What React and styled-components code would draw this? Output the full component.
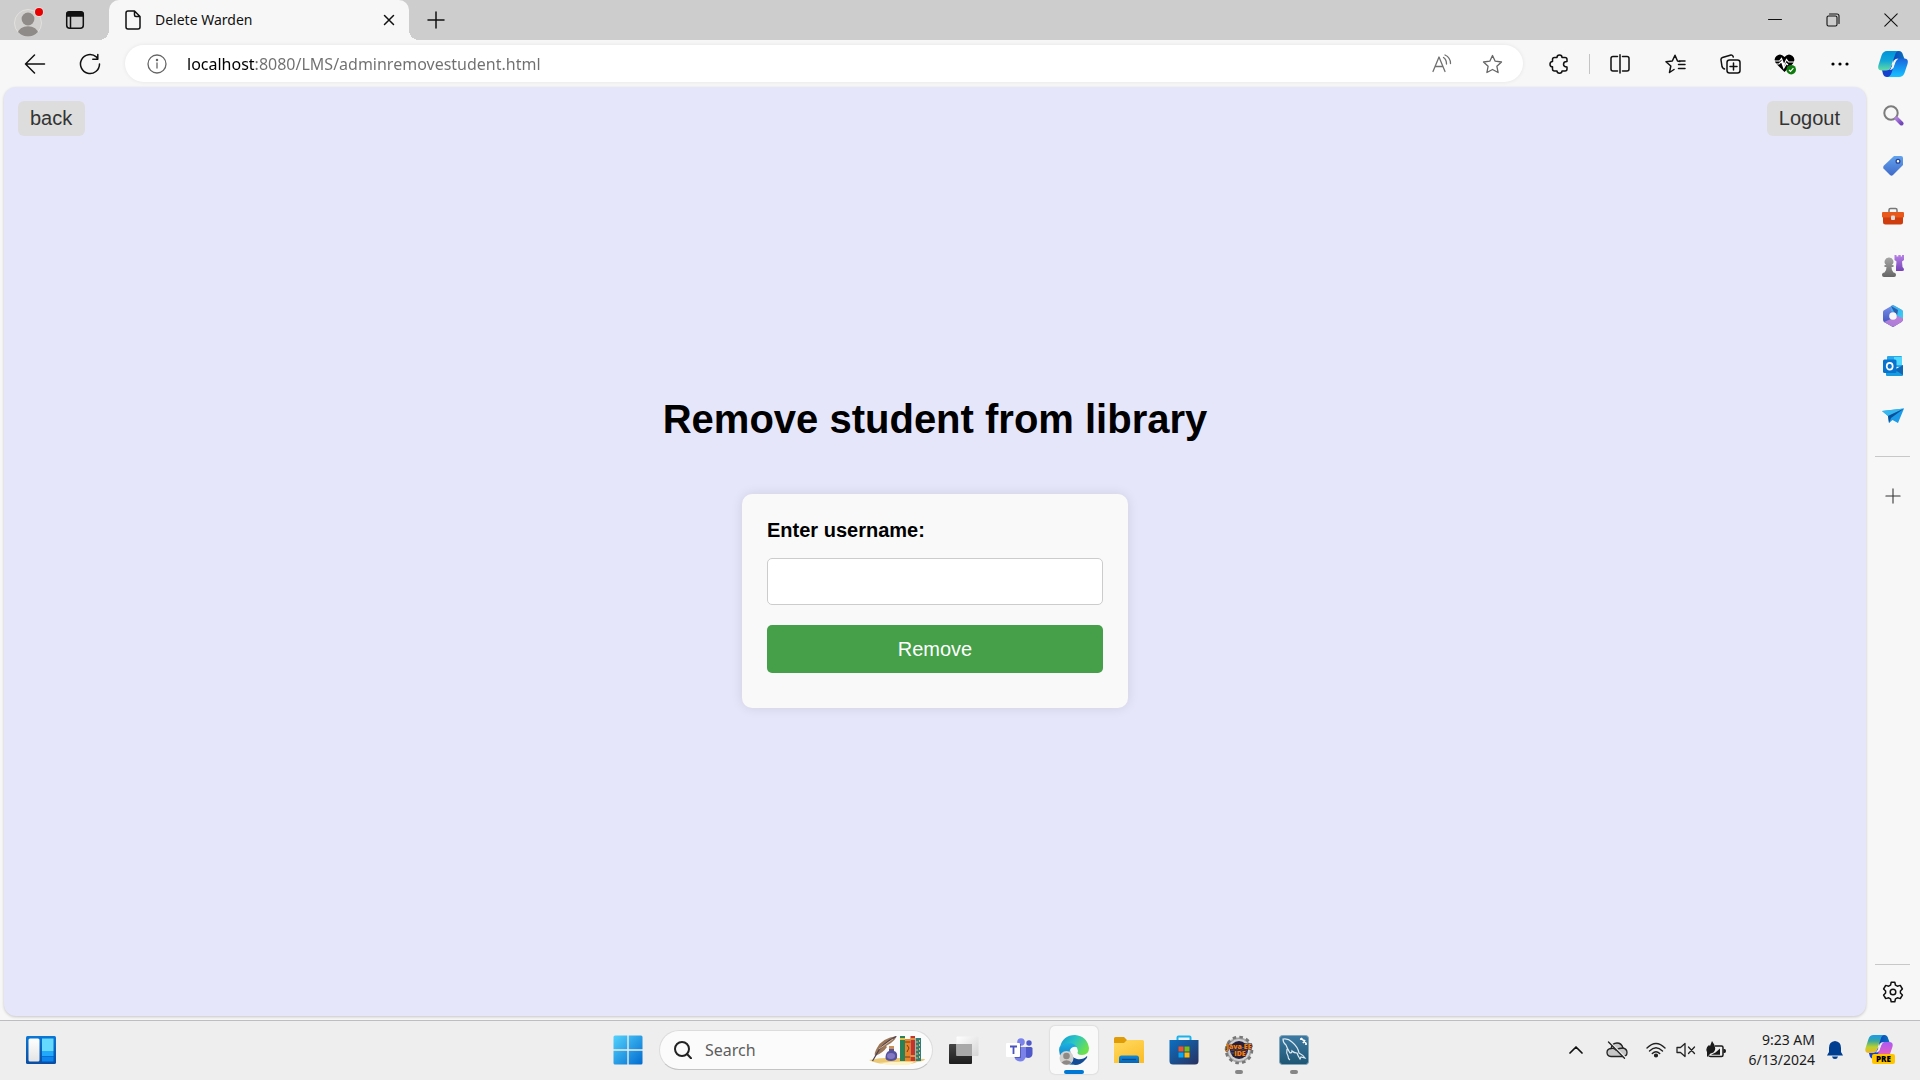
import React, { useState } from "react";
import styled, { createGlobalStyle } from "styled-components";

const GlobalStyle = createGlobalStyle`
  * { box-sizing: border-box; }
  body { margin: 0; background: #f7f7f7; font-family: "Noto Sans", "Open Sans", sans-serif; color: #1b1b1b; }
  button, input { font: inherit; color: inherit; }
  svg { display: block; flex: none; }
`;

/* ---------- Layout ---------- */

const Screen = styled.div`
  display: flex;
  flex-direction: column;
  min-height: 100vh;
`;

const BareButton = styled.button`
  display: flex;
  align-items: center;
  justify-content: center;
  flex: none;
  width: ${(p) => p.$w || 50}px;
  height: ${(p) => p.$h || 40}px;
  padding: 0;
  border: 0;
  background: transparent;
  border-radius: 4px;
  &:hover { background: rgba(0, 0, 0, 0.05); }
`;

/* ---------- Browser: title bar ---------- */

const TitleBar = styled.header`
  display: flex;
  align-items: center;
  height: 40px;
  padding-left: 4px;
  background: #cdcdcd;
`;

const Tab = styled.div`
  position: relative;
  display: flex;
  align-items: center;
  gap: 14px;
  width: 300px;
  height: 40px;
  margin: 0 7px 0 11px;
  padding: 0 4px 0 16px;
  border-radius: 10px 10px 0 0;
  background: #f7f7f7;
  &::before, &::after {
    content: "";
    position: absolute;
    bottom: 0;
    width: 10px;
    height: 10px;
  }
  &::before { left: -10px; background: radial-gradient(circle at 0 0, transparent 10px, #f7f7f7 10px); }
  &::after { right: -10px; background: radial-gradient(circle at 100% 0, transparent 10px, #f7f7f7 10px); }
`;

const TabTitle = styled.span`
  flex: 1;
  font-size: 14px;
  line-height: 20px;
  color: #111;
`;

const WindowControls = styled.div`
  display: flex;
  margin-left: auto;
`;

/* ---------- Browser: tool bar ---------- */

const ToolBar = styled.nav`
  display: flex;
  align-items: center;
  gap: 5px;
  height: 47px;
  padding: 0 5px 0 10px;
  background: #f7f7f7;
`;

const AddressBar = styled.div`
  display: flex;
  align-items: center;
  flex: 1;
  height: 37px;
  margin: 0 6px 0 5px;
  padding: 0 6px 0 22px;
  gap: 20px;
  border-radius: 19px;
  background: #fff;
  box-shadow: 0 0 4px rgba(0, 0, 0, 0.08);
`;

const AddressInput = styled.input`
  flex: 1;
  min-width: 0;
  height: 32px;
  padding: 0;
  border: 0;
  outline: 0;
  font-size: 16px;
  color: transparent;
  caret-color: #111;
  background: linear-gradient(90deg, #000 68px, #6f6f6f 68px);
  background-clip: text;
`;

const AddressActions = styled.div`
  display: flex;
`;

const VerticalRule = styled.div`
  width: 1px;
  height: 20px;
  background: #c4c4c4;
`;

/* ---------- Browser: body ---------- */

const BrowserBody = styled.div`
  display: flex;
  flex: 1;
  background: #f7f7f7;
`;

const Page = styled.main`
  display: flex;
  flex: 1;
  flex-direction: column;
  margin: 0 0 4px 4px;
  border-radius: 12px;
  background: #e6e6fa;
  box-shadow: 0 1px 3px rgba(0, 0, 0, 0.2);
  font-family: "Liberation Sans", Arial, sans-serif;
`;

const PageActions = styled.div`
  display: flex;
  justify-content: space-between;
  padding: 14px 13px 0 14px;
`;

const PageLink = styled.a`
  padding: 6px 13px 6px 12px;
  border-radius: 6px;
  background: #ddd;
  color: #333;
  font-size: 20px;
  line-height: 23px;
  text-decoration: none;
`;

const PageContent = styled.div`
  display: flex;
  flex: 1;
  flex-direction: column;
  align-items: center;
  justify-content: center;
  gap: 52px;
  padding-bottom: 47px;
`;

const Heading = styled.h1`
  margin: 0;
  font-size: 40px;
  line-height: 45px;
  color: #000;
`;

const Card = styled.form`
  display: flex;
  flex-direction: column;
  width: 386px;
  padding: 25px 25px 35px;
  border-radius: 10px;
  background: #f9f9f9;
  box-shadow: 0 0 12px rgba(0, 0, 0, 0.1);
`;

const FieldLabel = styled.label`
  margin-bottom: 16px;
  font-size: 20px;
  font-weight: bold;
  line-height: 23px;
  color: #000;
`;

const Field = styled.input`
  height: 47px;
  margin-bottom: 20px;
  padding: 12px;
  border: 1px solid #ccc;
  border-radius: 5px;
  background: #fff;
  font-size: 20px;
`;

const SubmitButton = styled.button`
  height: 48px;
  border: 0;
  border-radius: 5px;
  background: #45a049;
  color: #fff;
  font-size: 20px;
`;

const Sidebar = styled.aside`
  display: flex;
  flex-direction: column;
  align-items: center;
  width: 54px;
  padding: 4px 1px 3px 0;
`;

const SidebarRule = styled.div`
  width: 35px;
  height: 1px;
  margin: ${(p) => (p.$bottom ? "auto 0 2px" : "15px 0 14px")};
  background: #c8c8c8;
`;

/* ---------- Taskbar ---------- */

const Taskbar = styled.footer`
  display: grid;
  grid-template-columns: 1fr auto 1fr;
  align-items: center;
  height: 60px;
  padding: 0 0 2px 2px;
  border-top: 1px solid #bdbdc1;
  background: #eee;
`;

const TaskbarStart = styled.div`
  display: flex;
  padding-left: 15px;
`;

const TaskbarApps = styled.div`
  display: flex;
  align-items: center;
  gap: 7px;
`;

const TaskButton = styled.button`
  position: relative;
  display: flex;
  align-items: center;
  justify-content: center;
  width: 48px;
  height: 48px;
  padding: 0;
  border: 0;
  border-radius: 5px;
  background: ${(p) => (p.$state === "active" ? "#f9f9f9" : "transparent")};
  box-shadow: ${(p) => (p.$state === "active" ? "0 0 2px rgba(0, 0, 0, 0.2)" : "none")};
  &::after {
    content: ${(p) => (p.$state ? '""' : "none")};
    position: absolute;
    bottom: 0;
    width: ${(p) => (p.$state === "active" ? 20 : 8)}px;
    height: 4px;
    border-radius: 2px;
    background: ${(p) => (p.$state === "active" ? "#0078d4" : "#868686")};
  }
`;

const SearchBox = styled.label`
  display: flex;
  align-items: center;
  gap: 13px;
  width: 274px;
  height: 40px;
  padding: 0 7px 0 14px;
  border: 1px solid #dcdcdc;
  border-bottom-color: #c4c4c4;
  border-radius: 20px;
  background: #fbfbfb;
`;

const SearchInput = styled.input`
  flex: 1;
  min-width: 0;
  padding: 0;
  border: 0;
  outline: 0;
  background: transparent;
  font-size: 16px;
  &::placeholder { color: #5e5e5e; opacity: 1; }
`;

const Tray = styled.div`
  display: flex;
  align-items: center;
  justify-content: flex-end;
  padding-right: 15px;
`;

const Clock = styled.time`
  width: 84px;
  font-size: 14px;
  line-height: 20px;
  text-align: right;
  white-space: nowrap;
  color: #1b1b1b;
`;

const BadgeText = styled.text`
  font-family: "Open Sans", "Noto Sans", sans-serif;
  font-weight: 800;
  font-size: ${(p) => p.$size}px;
`;

/* ---------- Icons ---------- */

const Line = ({ w = 24, h = w, box, stroke = "#111", sw = 1.5, children }) => (
  <svg width={w} height={h} viewBox={box || `0 0 ${w} ${h}`} fill="none" stroke={stroke} strokeWidth={sw} strokeLinecap="round" strokeLinejoin="round" aria-hidden="true">
    {children}
  </svg>
);

const Art = ({ w = 24, h = w, box, children }) => (
  <svg width={w} height={h} viewBox={box || `0 0 ${w} ${h}`} aria-hidden="true">{children}</svg>
);

const Grad = ({ id, stops, x1 = 0, y1 = 0, x2 = 1, y2 = 1 }) => (
  <linearGradient id={id} x1={x1} y1={y1} x2={x2} y2={y2}>
    {stops.map((c, i) => <stop key={i} offset={i / (stops.length - 1)} stopColor={c} />)}
  </linearGradient>
);

const AvatarIcon = () => (
  <Art w={32} h={34}>
    <defs><clipPath id="avatarClip"><circle cx="16" cy="20" r="13.5" /></clipPath></defs>
    <circle cx="16" cy="20" r="13.5" fill="#d2d0ce" stroke="#e3e1de" />
    <g clipPath="url(#avatarClip)" fill="#8f8b88">
      <circle cx="16" cy="16" r="6.4" /><ellipse cx="16" cy="30.500" rx="10" ry="7.300" />
    </g>
    <circle cx="27" cy="9" r="4.800" fill="#e3e3e3" /><circle cx="27" cy="9" r="4" fill="#e80000" />
  </Art>
);
const TabActionsIcon = () => (
  <Line w={20} sw={1.5}>
    <rect x="1.700" y="1.700" width="16.600" height="16.600" rx="3" />
    <path d="M2 3.500Q2 2 4 2H16Q18 2 18 3.500V6H2Z" fill="#111" /><path d="M5.500 6V18" />
  </Line>
);
const DocumentIcon = () => (
  <Line w={16} h={20}><path d="M3 1H9.500L15 6.500V17Q15 19 13 19H3Q1 19 1 17V3Q1 1 3 1ZM9.500 1V5Q9.500 6.500 11 6.500H15" /></Line>
);
const CloseTabIcon = () => <Line w={12}><path d="M1.500 1.500L10.500 10.500M10.500 1.500L1.500 10.500" /></Line>;
const PlusIcon = ({ size = 18, sw = 1.5, color }) => <Line w={size} box="0 0 18 18" sw={sw} stroke={color}><path d="M9 1V17M1 9H17" /></Line>;
const MinimizeIcon = () => <Line w={14} sw={1}><path d="M.500 6.500H13.500" /></Line>;
const RestoreIcon = () => <Line w={14} sw={1.1}><rect x="1" y="3" width="10" height="10" rx="1.500" /><path d="M3.500 1H11Q13 1 13 3V10.500" /></Line>;
const CloseWindowIcon = () => <Line w={14} sw={1.1}><path d="M.800 .800L13.200 13.200M13.200 .800L.800 13.200" /></Line>;
const BackIcon = () => <Line w={22} h={20}><path d="M10.500 1L1.500 10L10.500 19M1.500 10H20.500" /></Line>;
const ReloadIcon = () => <Line w={22}><path d="M20.500 11A9.500 9.500 0 1 1 17.300 3.900L18.500 5.500M18.800 1.500V6.300H13.800" /></Line>;
const InfoIcon = () => (
  <Line w={20} stroke="#666" sw={1.3}><circle cx="10" cy="10" r="9" /><path d="M10 9V14" /><circle cx="10" cy="6" r=".6" fill="#666" /></Line>
);
const ReadAloudIcon = () => (
  <Line w={20} stroke="#707070" sw={1.3}><path d="M1 17.500L7 3L13 17.500M3 12.500H11M11.500 3.500Q14.500 5.500 14.500 10M13 1Q18.500 3.500 18.500 9.500" /></Line>
);
const STAR = "M10.500 1.500L13.200 7.200L19.500 8L14.900 12.300L16.100 18.500L10.500 15.500L4.900 18.500L6.100 12.300L1.500 8L7.800 7.200Z";
const StarIcon = () => <Line w={21} h={20} stroke="#666" sw={1.3}><path d={STAR} /></Line>;
const ExtensionIcon = () => (
  <Line w={20}><path d="M5.500 3.500H8Q8 1 10.500 1T13 3.500H16Q18 3.500 18 5.500V7.500Q14.500 7.500 14.500 10.200T18 13V15Q18 17 16 17H13Q13 19.200 10.500 19.200T8 17H5.500Q3.500 17 3.500 15V12.800Q1 12.800 1 10.200T3.500 7.600V5.500Q3.500 3.500 5.500 3.500Z" /></Line>
);
const SplitIcon = () => (
  <Line w={20}><path d="M7.500 2.500H3Q1 2.500 1 4.500V15Q1 17 3 17H7.500M12.500 2.500H17Q19 2.500 19 4.500V15Q19 17 17 17H12.500M10 .800V19" /></Line>
);
const FavoritesIcon = () => (
  <Line w={21} h={20}><path d="M9 15.500L4.500 18.500L5.800 12L1 7.700L7.300 7L10 1.300L12.500 7L15 7.400M13.500 10.500H20M13.500 14.500H20M14.500 7H20" /></Line>
);
const CollectionsIcon = () => (
  <Line w={21} h={20}><path d="M4.500 15L3.500 14.500Q2.500 14 2 12.500L1 6Q.800 4 2.500 3.500L11 1Q12.800 .800 13.300 3" /><rect x="7" y="6" width="13" height="13" rx="2.500" /><path d="M13.500 9V16M10 12.500H17" /></Line>
);
const HeartIcon = () => (
  <Art w={22} h={22}>
    <path d="M10.500 19L2 10.500Q-1 6 2.500 3Q6.500-.500 10.500 4Q14.500-.500 18.500 3Q22 6 19 10.500Z" fill="#000" />
    <path d="M0 8H5.500L7.500 5.500L10 12L12.500 6.500L14.500 9H21M1 11H5L7.500 8.500L9.800 15L12.500 10.500L14 12" fill="none" stroke="#fff" strokeWidth="1.200" />
    <circle cx="17.200" cy="16.700" r="4.800" fill="#0f7b0f" /><path d="M15 17L16.500 18.300L19.400 15.200" fill="none" stroke="#fff" strokeWidth="1.200" />
  </Art>
);
const MoreIcon = () => <Art w={18} h={4}><circle cx="2" cy="2" r="1.600" /><circle cx="9" cy="2" r="1.600" /><circle cx="16" cy="2" r="1.600" /></Art>;

const CopilotShape = ({ id, left, right, gap }) => (
  <>
    <defs>
      <Grad id={`${id}L`} x2={0} stops={left} />
      <Grad id={`${id}R`} x2={0} stops={right} />
      <Grad id={`${id}T`} y2={0} stops={["#0a3fc4", "#0b74b8"]} />
    </defs>
    <path d="M17 0H21Q24 0 25 4L26.500 8H21Q18 8 16 13L14 4Z" fill={`url(#${id}T)`} />
    <path d="M13 26H9Q6 26 5 23L4 19H9Q12 19 14 13L17 22Z" fill="#1541cf" />
    <path d="M9 0H21Q18 0 17 4L13 15.500Q11.500 19.500 8 19.500H4Q-1 19.500 .500 14L3.500 4.500Q5 0 9 0Z" fill={`url(#${id}L)`} />
    <path d="M21 26H9Q12 26 13.500 22L17 11Q18.500 7.500 22 7.500H26Q31 7.500 29.500 13L26.500 22Q25 26 21 26Z" fill={`url(#${id}R)`} />
    <path d="M11 19Q13 18 14 15L16 9.500Q17 7.500 20.500 7.500Q18.500 8.500 17.500 11L15.300 17Q14.500 19 11 19Z" fill={gap} />
  </>
);
const CopilotIcon = () => <Art w={30} h={26}><CopilotShape id="cp" gap="#f7f7f7" left={["#0093d9", "#13a6d8", "#62dda2"]} right={["#1b63dc", "#1595f0", "#18c3ff"]} /></Art>;

const SideSearchIcon = () => (
  <Art w={22}><defs><Grad id="ss" stops={["#b07ee0", "#7146b8"]} /></defs>
    <circle cx="9" cy="8" r="6.700" fill="none" stroke="#7c7c7c" strokeWidth="2" />
    <path d="M14.500 13.500L19.500 18.500" stroke="url(#ss)" strokeWidth="4" strokeLinecap="round" /></Art>
);
const TagIcon = () => (
  <Art w={22}><defs><Grad id="tag" x2={0} stops={["#62a3ee", "#3f69c9"]} /></defs>
    <path d="M12 1H19Q21 1 21 3V10L11 20Q9.500 21.500 8 20L1.500 13.500Q.500 12 2 10.500Z" fill="url(#tag)" />
    <circle cx="16" cy="6.300" r="1.900" fill="#fff" stroke="#2a4390" strokeWidth="1.300" /></Art>
);
const ToolboxIcon = () => (
  <Art w={22} h={18}><path d="M7 6V3Q7 1.500 8.500 1.500H13.500Q15 1.500 15 3V6" fill="none" stroke="#777" strokeWidth="1.500" />
    <path d="M1 9H21V15Q21 17.500 18.500 17.500H3.500Q1 17.500 1 15Z" fill="#cf3c0e" /><rect y="5" width="22" height="5.500" rx="1" fill="#e8591c" />
    <rect x="9" y="8.500" width="4" height="4.500" rx="1" fill="#ddd" /></Art>
);
const GamesIcon = () => (
  <Art w={22} h={22}><defs><Grad id="pawn" x2={0} stops={["#a6a6a6", "#666"]} /><Grad id="rook" x2={0} stops={["#b782e6", "#7543b7"]} /></defs>
    <path d="M12.500 0H14.500V1.500H16.300V0H18.700V1.500H20V0H22V5L20 6.500L20.500 12Q22 13 22 14.500Q22 16 20 16H14V12L14.500 6.500L12.500 5Z" fill="url(#rook)" />
    <path d="M7 2.500A4.200 4.200 0 0 1 9.800 10H11.500V12H9.500Q9.500 16 11.500 17.500Q14 17.500 14 20Q14 22 12 22H2Q0 22 0 20Q0 17.500 2.500 17.500Q4.500 16 4.500 12H2.500V10H4.200A4.200 4.200 0 0 1 7 2.500Z" fill="url(#pawn)" /></Art>
);
const M365Icon = () => (
  <Art w={22}><defs><Grad id="ma" stops={["#3da6ef", "#37d0f5"]} /><Grad id="mb" y1={1} y2={0} stops={["#a77dd8", "#c07fd8"]} /><Grad id="mc" x2={0} stops={["#7c93ea", "#3547b6"]} /></defs>
    <path d="M11 0L20 5Q21 6 21 7V14Q21 16 19.500 17L11 22L2 17Q1 16 1 14.500V7Q1 5.500 2.500 5Z" fill="url(#mc)" />
    <path d="M9 1Q11-.500 13 1L20 5Q21 6 21 7V14L15 11Q15 7 11 7L9 6Z" fill="url(#ma)" />
    <path d="M21 13Q21 16 19.500 17L13 21Q11 22.500 9 21L2 17L10 13.500Q13 15 15 11Z" fill="url(#mb)" />
    <path d="M9 1L16 5L15 11L12 7Z" fill="#253b91" opacity=".7" /><circle cx="11" cy="11" r="3.800" fill="#f7f7f7" /></Art>
);
const OutlookIcon = () => (
  <Art w={22}><rect x="5" y="1" width="15" height="11" rx="1" fill="#28a8ea" /><path d="M12 2H20V10H12Z" fill="#50d9ff" /><path d="M4 11L12 15L21 10V20Q21 21 20 21H5Q4 21 4 20Z" fill="#199be0" /><path d="M21 10V20L13 15Z" fill="#1066b5" />
    <rect x="1" y="4.500" width="13.500" height="13.500" rx="1.500" fill="#0873ce" /><ellipse cx="7.700" cy="11.200" rx="3" ry="3.400" fill="none" stroke="#fff" strokeWidth="1.700" /></Art>
);
const SendIcon = () => (
  <Art w={22} h={16}><path d="M0 3L22 .500L16 15L10.500 12L7 15L6 8Z" fill="#1b9be8" /><path d="M22 .500L6 8L0 3Z" fill="#36b7ee" /><path d="M22 .500L6 8L7 15L9 10Z" fill="#0b4f98" /></Art>
);
const GearIcon = () => (
  <Line w={22}><path d="M9.200 1.300H12.800L13.500 4.200L15.300 5.200L18.300 4.400L20.400 8L18.400 10V12L20.400 14L18.300 17.600L15.300 16.800L13.500 17.800L12.800 20.700H9.200L8.500 17.800L6.700 16.800L3.700 17.600L1.600 14L3.600 12V10L1.600 8L3.700 4.400L6.700 5.200L8.500 4.200Z" /><circle cx="11" cy="11" r="2.800" /></Line>
);

const WidgetsIcon = () => (
  <Art w={30} h={28}><defs><Grad id="wg" x2={0} stops={["#0a77d5", "#0a4da3"]} /><Grad id="ww" x2={0} stops={["#fff", "#e4e4e4"]} /></defs>
    <rect width="30" height="28" rx="1.500" fill="url(#wg)" /><rect x="2.500" y="2.500" width="11" height="23" rx="1.500" fill="url(#ww)" />
    <path d="M16 2.500H27.500V15H16Z" fill="#66d9ff" /><path d="M16 15H27.500V20H16Z" fill="#23a9fb" /><path d="M16 20.500H27.500V25.500H16Z" fill="#0a86ee" /></Art>
);
const StartIcon = () => (
  <Art w={30}><defs><linearGradient id="st" gradientUnits="userSpaceOnUse" x1="0" y1="0" x2="30" y2="30"><stop stopColor="#55d4fd" /><stop offset="1" stopColor="#0069cf" /></linearGradient></defs>
    <path d="M2 .500H14.300V14.300H.500V2Q.500 .500 2 .500ZM15.700 .500H28Q29.500 .500 29.500 2V14.300H15.700ZM.500 15.700H14.300V29.500H2Q.500 29.500 .500 28ZM15.700 15.700H29.500V28Q29.500 29.500 28 29.500H15.700Z" fill="url(#st)" /></Art>
);
const SearchIcon = () => <Line w={18} stroke="#222" sw={2}><circle cx="8" cy="8" r="7" /><path d="M13 13L17 17.200" /></Line>;
const BooksIcon = () => (
  <Art w={56} h={30}>
    <path d="M0 25Q14 22 30 23L56 24Q56 26 48 27Q42 30 26 29Q8 30 0 25Z" fill="#ebc774" /><path d="M10 28Q28 26 45 27L40 30Q22 31 10 28Z" fill="#fff3c4" />
    <path d="M28 1Q13 3 8 13Q5 18 6 21Q14 18 18 12L17 11L22 8Q26 5 28 1Z" fill="#9b7757" /><path d="M27 1.500Q12 9 7 20L3.500 26" fill="none" stroke="#4a3f55" strokeWidth="1.200" /><path d="M10 14L24 4" stroke="#cfb397" />
    <path d="M20 11H25V16Q29 17 28 23Q27 26 22 26Q16 26 16.500 22Q17 17 20 16Z" fill="#54529b" /><path d="M20 11H25V14H20Z" fill="#c98f55" /><ellipse cx="22" cy="21" rx="4" ry="3" fill="#8378c2" />
    <path d="M31 1H36V26H31Z" fill="#2b8157" /><path d="M31 3H36V5H31Z" fill="#e1c04a" /><path d="M36 4H41.500V26H36Z" fill="#e8852a" /><path d="M36 7H41.500M36 22H41.500" stroke="#7b3a14" /><path d="M38 10L40 13L38 17" stroke="#7b3a14" fill="none" />
    <path d="M41.500 1H46V26H41.500Z" fill="#c53427" /><path d="M41.500 4H46M41.500 21H46" stroke="#e9b34a" strokeWidth="1.500" /><path d="M46.500 3H52V26H46.500Z" fill="#337c79" /><path d="M48 6V24M50.500 5V24" stroke="#d8c66a" strokeDasharray="2 2" />
  </Art>
);
const TaskViewIcon = () => (
  <Art w={30} h={28}><defs><Grad id="tv" x2={0} stops={["#454545", "#1d1d1d"]} /><Grad id="tl" stops={["#fff", "#d5d5d5"]} /></defs>
    <rect y="8" width="23" height="20" rx="1" fill="url(#tv)" /><rect x="7.500" y=".500" width="22" height="19.500" rx="1" fill="url(#tl)" /><path d="M7.500 8H23V20H7.500Z" fill="#a9a9a9" /></Art>
);
const TeamsIcon = () => (
  <Art w={27} h={24}><circle cx="15" cy="4" r="3.800" fill="#7b83eb" /><circle cx="23" cy="5" r="2.700" fill="#5059c9" /><path d="M18 9H25Q26.500 9 26.500 10.500V16Q26 20 22 20L18 19Z" fill="#5059c9" /><path d="M8 9H20V18Q19 23.500 14 23.500Q9 23 8 18Z" fill="#7b83eb" /><path d="M9 6H15V20H9Z" fill="#3e438f" opacity=".6" /><rect y="5" width="14" height="14" rx="1" fill="#fff" /><path d="M4 8.500H11M7.500 8.500V16" stroke="#4b53bc" strokeWidth="1.800" /></Art>
);
const EdgeIcon = () => (
  <Art w={30} h={30}><defs><Grad id="ea" y2={.5} stops={["#1297d5", "#28c4c5", "#6be04e"]} /><Grad id="eb" x2={0} stops={["#1db2e2", "#0b67bb"]} /></defs>
    <path d="M1 12Q4 0 16 0Q28 1 30 13Q30 20 23 20Q17 20 19 16Q18 9 10 9Q4 9 1 12Z" fill="url(#ea)" />
    <path d="M.500 12Q4 8 10 8Q15 8 18 12Q13 11 11 15Q9 20 13 25Q15 28 19 29Q9 32 3 24Q-1 18 .500 12Z" fill="url(#eb)" />
    <path d="M11 15Q11 22 18 24Q24 25 28 21Q29 22 26 25Q22 30 16 30Q8 26 11 15Z" fill="#124c95" />
    <circle cx="7.500" cy="23" r="7" fill="#d2d0ce" /><circle cx="7.500" cy="21" r="3.300" fill="#8d8986" /><path d="M2.500 27.500Q7.500 23 12.500 27.500Q7.500 32 2.500 27.500Z" fill="#8d8986" /></Art>
);
const FolderIcon = () => (
  <Art w={30} h={28}><defs><Grad id="fo" x2={.6} stops={["#ffdb62", "#fcbf2c"]} /><Grad id="fb" x2={0} stops={["#128ad8", "#0764b5"]} /></defs>
    <path d="M1.500 1H10L13 4H28V12H0V2.500Q0 1 1.500 1Z" fill="#df9c08" /><path d="M0 7H10L13 4H28.500Q30 4 30 5.500V27H0Z" fill="url(#fo)" /><path d="M5 27V22Q5 19.500 7.500 19.500H22.500Q25 19.500 25 22V27Z" fill="url(#fb)" /><path d="M8 23.500H22" stroke="#064b88" strokeWidth="1.200" /></Art>
);
const StoreIcon = () => (
  <Art w={30}><defs><Grad id="so" stops={["#0b70c2", "#28315f"]} /></defs>
    <path d="M8.500 7V2.500Q8.500 1.500 9.500 1.500H20.500Q21.500 1.500 21.500 2.500V7" fill="none" stroke="#1bb3ec" strokeWidth="2" /><path d="M.500 5H29.500V26Q29.500 29.500 26 29.500H4Q.500 29.500 .500 26Z" fill="url(#so)" />
    <path d="M9.500 11.500H14.500V16.500H9.500Z" fill="#f35325" /><path d="M15.500 11.500H20.500V16.500H15.500Z" fill="#81bc06" /><path d="M9.500 17.500H14.500V22.500H9.500Z" fill="#05a6f0" /><path d="M15.500 17.500H20.500V22.500H15.500Z" fill="#ffba08" /></Art>
);
const JavaIcon = () => (
  <Art w={30}><circle cx="15" cy="15" r="12.800" fill="#bbb" stroke="#777" strokeWidth="3" strokeDasharray="3.500 3.200" /><circle cx="15" cy="15" r="11.500" fill="#d0d0d0" stroke="#888" strokeWidth=".7" /><circle cx="15" cy="15" r="9" fill="#28203f" />
    <path d="M7 12.500H23M7 15H23M7 18H23" stroke="#625b83" /><g fill="#f58220" stroke="#35200f" strokeWidth="1" paintOrder="stroke" textAnchor="middle"><BadgeText x="15" y="14" $size={7}>Java EE</BadgeText><BadgeText x="16" y="21" $size={7}>IDE</BadgeText></g></Art>
);
const MySqlIcon = () => (
  <Art w={30}><defs><Grad id="my" x2={0} stops={["#3d7aa3", "#1e5573"]} /></defs><rect x=".5" y=".5" width="29" height="29" rx="3" fill="url(#my)" stroke="#7fa6b9" />
    <path d="M4 4Q9 3 13 7Q19 12 20 18Q24 20 26 23L22 22L21 24Q19 21 18 18Q15 18 13 16Q13 18 11 18Q8 13 7 10Q4 8 4 4ZM8 14Q7 18 9 21Q9 24 11 25" fill="none" stroke="#dbe8ef" strokeWidth="1.200" /><path d="M22 3L27 8M21 4L24 4.500M24 8L26 5M27 8V10" stroke="#fff" strokeWidth="1.700" /></Art>
);
const ChevronIcon = () => <Line w={14} h={8} sw={1.7}><path d="M1 7L7 1L13 7" /></Line>;
const CloudOffIcon = () => (
  <Line w={22} h={18} sw={1.3} stroke="#222"><path d="M5 15.500Q1 15 1 11.500Q1 8 5 7.500Q6 2 11 2Q15.500 2 17 7Q21 8 21 11.500Q21 15.500 16.500 15.500Z" fill="#c6c6c6" /><path d="M5 7.500Q8 7 10 9Q13 7 17 7" /><path d="M3.500 1L19.500 17" stroke="#eee" strokeWidth="2" /><path d="M2.500 1L18.500 17.300" /></Line>
);
const WifiIcon = () => (
  <Line w={20} h={16} stroke="#222" sw={1.4}><path d="M1 6Q10-3 19 6M3.500 9Q10 2.500 16.500 9M6.300 11.500Q10 7.800 13.700 11.500" /><circle cx="10" cy="13.500" r="1.400" fill="#222" /></Line>
);
const MuteIcon = () => <Line w={20} h={16} stroke="#222" sw={1.3}><path d="M1 5.500H4.500L9 1.500V14.500L4.500 10.500H1ZM12.500 5L18.500 11.500M18.500 5L12.500 11.500" /></Line>;
const BatteryIcon = () => (
  <Art w={20} h={18}><path d="M9 5H15.500Q17 5 17 6.500V14Q17 15.500 15.500 15.500H4.500Q3 15.500 2.500 14.500" fill="none" stroke="#1b1b1b" strokeWidth="1.500" /><path d="M17.500 8H18.500Q20 8 20 10T18.500 12H17.500Z" fill="#1b1b1b" /><path d="M5 13.800H14V7.500L9.500 11.500Z" fill="#1b1b1b" /><path d="M6 0Q10 5 9 9Q8 12 4.500 12.500L1 16V11Q-1 7 3 4L4 5Z" fill="#1b1b1b" /></Art>
);
const BellIcon = () => (
  <Art w={16} h={20}><path d="M8 1Q14 1.500 14 8V12L16 15.500H0L2 12V8Q2 1.500 8 1ZM5 16.500H11Q10.500 19 8 19T5 16.500Z" fill="#003e92" /></Art>
);
const CopilotPreIcon = () => (
  <Art w={30} h={30}>
    <svg x="0" y="0" width="28" height="24" viewBox="0 0 30 26"><CopilotShape id="cq" gap="#eeeeee" left={["#189af0", "#3aa79e", "#bad12e", "#f6b326"]} right={["#a85bf5", "#d45bd1", "#fb7297"]} /></svg>
    <rect x="7" y="19" width="23" height="10" rx="2" fill="#ffc600" /><BadgeText x="18.500" y="27" textAnchor="middle" $size={8}>PRE</BadgeText></Art>
);

/* ---------- Data ---------- */

const toolbarItems = [
  ["Split screen", SplitIcon], ["Favorites", FavoritesIcon], ["Collections", CollectionsIcon],
  ["Browser essentials", HeartIcon], ["Settings and more", MoreIcon],
];
const sidebarItems = [
  ["Search", SideSearchIcon], ["Shopping", TagIcon], ["Tools", ToolboxIcon], ["Games", GamesIcon],
  ["Microsoft 365", M365Icon], ["Outlook", OutlookIcon], ["Drop", SendIcon],
];
const taskItems = [
  ["Task view", TaskViewIcon], ["Teams", TeamsIcon], ["Edge", EdgeIcon, "active"], ["File Explorer", FolderIcon],
  ["Store", StoreIcon], ["Eclipse", JavaIcon, "running"], ["MySQL Workbench", MySqlIcon, "running"],
];
const trayItems = [
  ["Show hidden icons", ChevronIcon, 34], ["OneDrive", CloudOffIcon, 48], ["Network", WifiIcon, 30],
  ["Volume", MuteIcon, 30], ["Battery", BatteryIcon, 30],
];

export default function App() {
  const [url, setUrl] = useState("localhost:8080/LMS/adminremovestudent.html");
  const [username, setUsername] = useState("");

  return (
    <Screen>
      <GlobalStyle />
      <TitleBar>
        <BareButton $w={48} aria-label="Profile"><AvatarIcon /></BareButton>
        <BareButton $w={46} aria-label="Tab actions"><TabActionsIcon /></BareButton>
        <Tab>
          <DocumentIcon />
          <TabTitle>Delete Warden</TabTitle>
          <BareButton $w={32} $h={32} aria-label="Close tab"><CloseTabIcon /></BareButton>
        </Tab>
        <BareButton $w={40} aria-label="New tab"><PlusIcon /></BareButton>
        <WindowControls>
          <BareButton $w={58} aria-label="Minimize"><MinimizeIcon /></BareButton>
          <BareButton $w={58} aria-label="Restore"><RestoreIcon /></BareButton>
          <BareButton $w={58} aria-label="Close"><CloseWindowIcon /></BareButton>
        </WindowControls>
      </TitleBar>

      <ToolBar>
        <BareButton aria-label="Back"><BackIcon /></BareButton>
        <BareButton aria-label="Reload"><ReloadIcon /></BareButton>
        <AddressBar>
          <InfoIcon />
          <AddressInput aria-label="Address" spellCheck={false} value={url} onChange={(e) => setUrl(e.target.value)} />
          <AddressActions>
            <BareButton $h={32} aria-label="Read aloud"><ReadAloudIcon /></BareButton>
            <BareButton $h={32} aria-label="Add to favorites"><StarIcon /></BareButton>
          </AddressActions>
        </AddressBar>
        <BareButton aria-label="Extensions"><ExtensionIcon /></BareButton>
        <VerticalRule />
        {toolbarItems.map(([name, Icon]) => (
          <BareButton key={name} aria-label={name}><Icon /></BareButton>
        ))}
        <BareButton $w={45} aria-label="Copilot"><CopilotIcon /></BareButton>
      </ToolBar>

      <BrowserBody>
        <Page>
          <PageActions>
            <PageLink href="#back">back</PageLink>
            <PageLink href="#logout">Logout</PageLink>
          </PageActions>
          <PageContent>
            <Heading>Remove student from library</Heading>
            <Card onSubmit={(e) => e.preventDefault()}>
              <FieldLabel htmlFor="username">Enter username:</FieldLabel>
              <Field id="username" type="text" value={username} onChange={(e) => setUsername(e.target.value)} />
              <SubmitButton type="submit">Remove</SubmitButton>
            </Card>
          </PageContent>
        </Page>
        <Sidebar>
          {sidebarItems.map(([name, Icon]) => (
            <BareButton key={name} $h={50} aria-label={name}><Icon /></BareButton>
          ))}
          <SidebarRule />
          <BareButton $h={50} aria-label="Customize"><PlusIcon size={16} sw={1.2} color="#333" /></BareButton>
          <SidebarRule $bottom />
          <BareButton $h={50} aria-label="Settings"><GearIcon /></BareButton>
        </Sidebar>
      </BrowserBody>

      <Taskbar>
        <TaskbarStart>
          <TaskButton aria-label="Widgets"><WidgetsIcon /></TaskButton>
        </TaskbarStart>
        <TaskbarApps>
          <TaskButton aria-label="Start"><StartIcon /></TaskButton>
          <SearchBox>
            <SearchIcon />
            <SearchInput type="text" placeholder="Search" aria-label="Search" />
            <BooksIcon />
          </SearchBox>
          {taskItems.map(([name, Icon, state]) => (
            <TaskButton key={name} $state={state} aria-label={name}><Icon /></TaskButton>
          ))}
        </TaskbarApps>
        <Tray>
          {trayItems.map(([name, Icon, w]) => (
            <BareButton key={name} $w={w} aria-label={name}><Icon /></BareButton>
          ))}
          <Clock>9:23 AM<br />6/13/2024</Clock>
          <BareButton $w={40} aria-label="Notifications"><BellIcon /></BareButton>
          <BareButton aria-label="Copilot preview"><CopilotPreIcon /></BareButton>
        </Tray>
      </Taskbar>
    </Screen>
  );
}
